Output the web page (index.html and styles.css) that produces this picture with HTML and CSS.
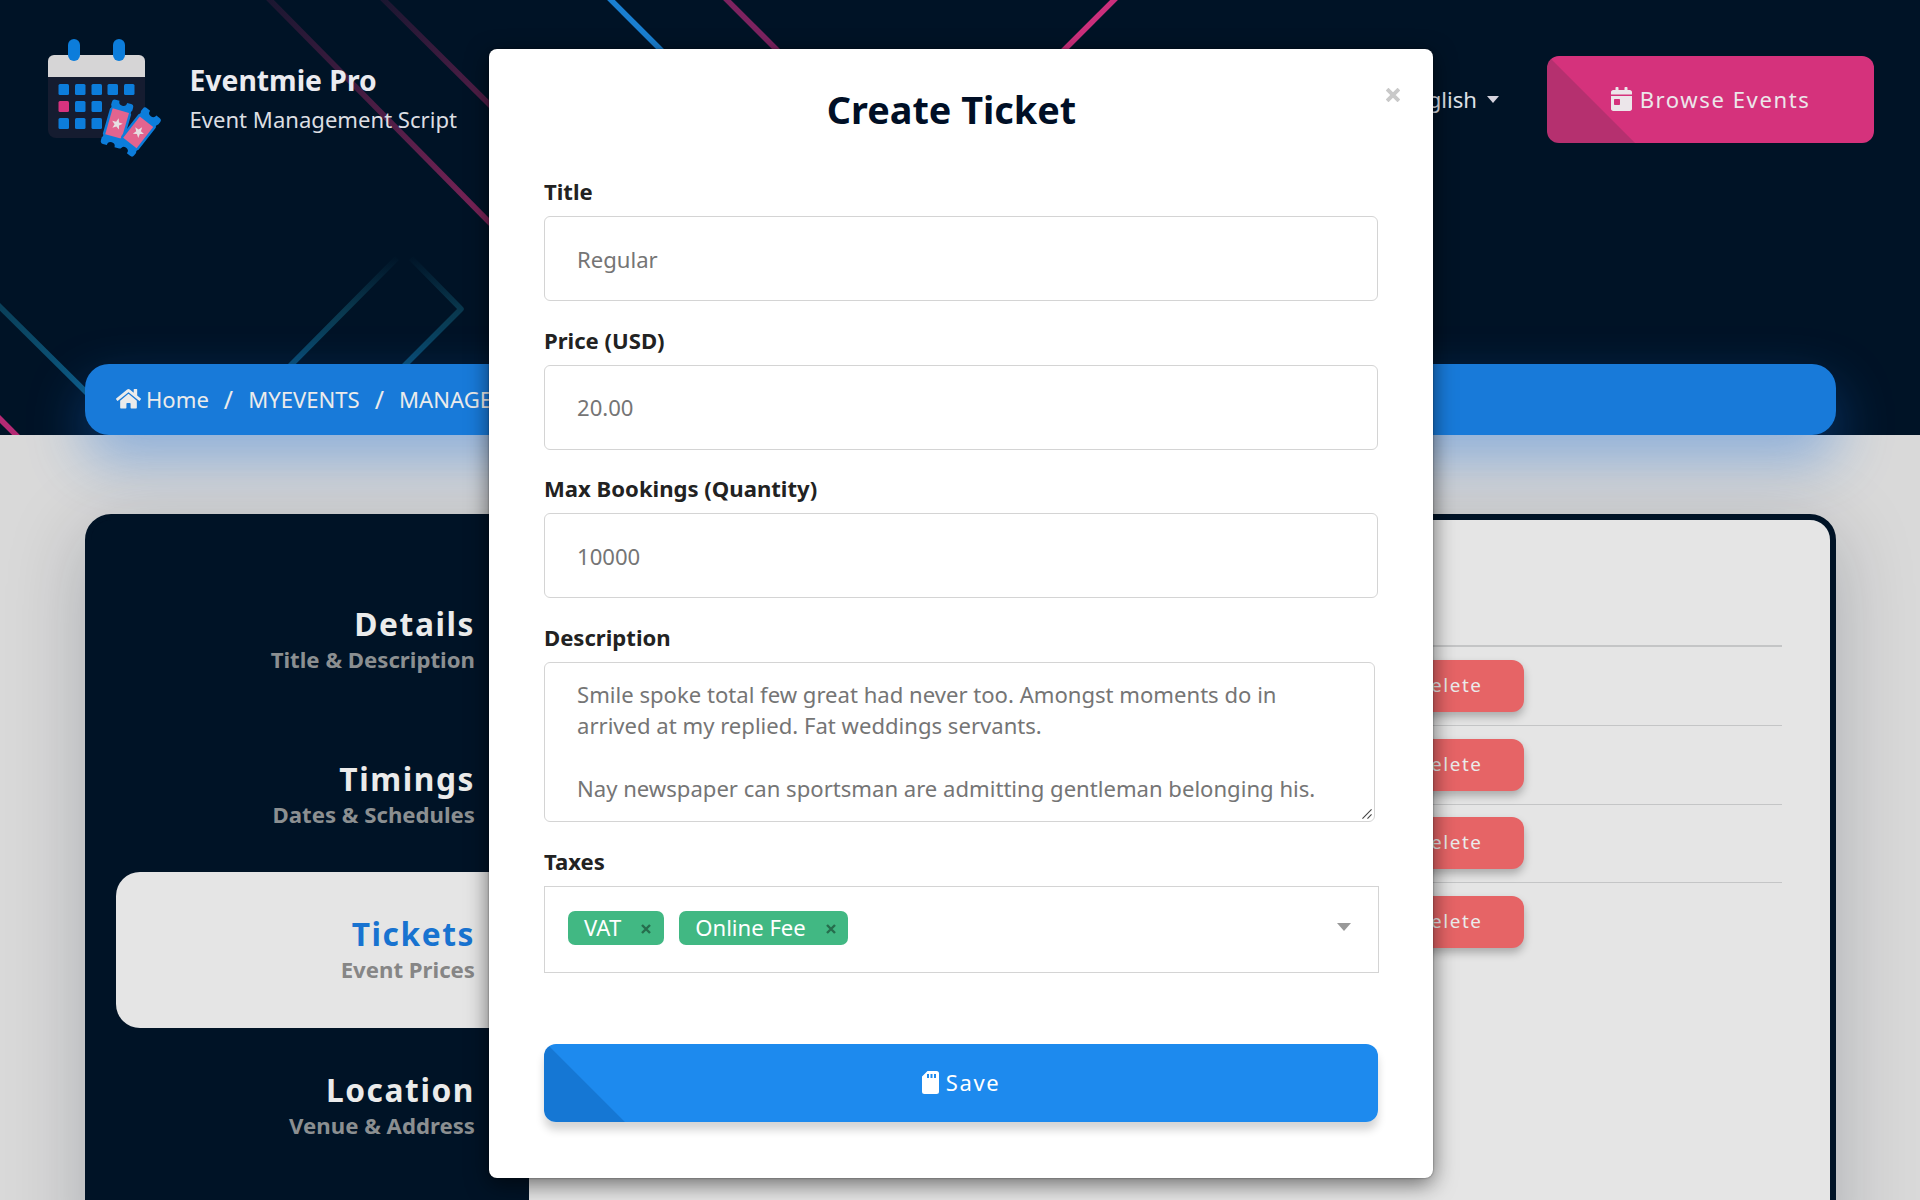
FILE: index.html
```html
<!DOCTYPE html>
<html lang="en">
<head>
<meta charset="utf-8">
<title>Eventmie Pro - Create Ticket</title>
<link rel="stylesheet" href="styles.css">
</head>
<body>
<div class="page">
  <header class="hero">
    <svg class="hero-lines" width="1920" height="435" viewBox="0 0 1920 435" fill="none" stroke-width="5.5" aria-hidden="true">
      <defs>
        <linearGradient id="pinkA" gradientUnits="userSpaceOnUse" x1="265" y1="0" x2="500" y2="235"><stop offset="0" stop-color="#d9307d" stop-opacity=".12"/><stop offset="1" stop-color="#d9307d" stop-opacity=".6"/></linearGradient>
        <linearGradient id="pinkB" gradientUnits="userSpaceOnUse" x1="380" y1="0" x2="490" y2="110"><stop offset="0" stop-color="#d9307d" stop-opacity=".12"/><stop offset="1" stop-color="#d9307d" stop-opacity=".4"/></linearGradient>
        <linearGradient id="tealA" gradientUnits="userSpaceOnUse" x1="0" y1="305" x2="85" y2="390"><stop offset="0" stop-color="#0d4f6b" stop-opacity=".75"/><stop offset="1" stop-color="#0d5a82"/></linearGradient>
        <linearGradient id="tealB" gradientUnits="userSpaceOnUse" x1="0" y1="255" x2="0" y2="364"><stop offset="0" stop-color="#0f5068" stop-opacity="0"/><stop offset=".5" stop-color="#0f5068" stop-opacity=".6"/><stop offset="1" stop-color="#0a5078" stop-opacity=".9"/></linearGradient>
      </defs>
      <path d="M267 -3L495 228" stroke="url(#pinkA)"/>
      <path d="M381 -3L495 110" stroke="url(#pinkB)"/>
      <path d="M607 -4L663 52" stroke="#1a7fd0"/>
      <path d="M723 -4L779 52" stroke="#7d2360"/>
      <path d="M1118 -4L1062 52" stroke="#cb2f7b"/>
      <path d="M-4 303L90 396" stroke="url(#tealA)"/>
      <path d="M-4 415L20 439" stroke="#b52a74"/>
      <path d="M286 370L397 258M411 258L461 309L400 370" stroke="url(#tealB)" stroke-linejoin="round"/>
    </svg>
    <nav class="navbar">
      <a class="brand">
        <svg class="logo" width="116" height="120" viewBox="0 0 116 120" aria-hidden="true">
          <path d="M1 20h97v72a8 8 0 0 1-8 8H9a8 8 0 0 1-8-8z" fill="#151c30"/>
          <path d="M1 39V23a6 6 0 0 1 6-6h85a6 6 0 0 1 6 6v16z" fill="#d6d5d6"/>
          <rect x="21" y="1" width="12" height="22" rx="6" fill="#0c7ddb"/>
          <rect x="66" y="1" width="12" height="22" rx="6" fill="#0c7ddb"/>
          <g fill="#0c7ddb">
            <rect x="11.500" y="46" width="10.500" height="11" rx="1.500"/><rect x="28" y="46" width="10.500" height="11" rx="1.500"/><rect x="44.500" y="46" width="10.500" height="11" rx="1.500"/><rect x="60.500" y="46" width="10.500" height="11" rx="1.500"/><rect x="77" y="46" width="10.500" height="11" rx="1.500"/>
            <rect x="28" y="63" width="10.500" height="11" rx="1.500"/><rect x="44.500" y="63" width="10.500" height="11" rx="1.500"/>
            <rect x="11.500" y="80" width="10.500" height="11" rx="1.500"/><rect x="28" y="80" width="10.500" height="11" rx="1.500"/><rect x="44.500" y="80" width="10.500" height="11" rx="1.500"/>
          </g>
          <rect x="11.500" y="63" width="10.500" height="11" rx="1.500" fill="#d6337f"/>
          <g transform="translate(70 86) rotate(16)">
            <path d="M-11 -20a3 3 0 0 1 3-3h4a4 4 0 0 0 8 0h4a3 3 0 0 1 3 3v3a3 3 0 0 0 0 4v26a3 3 0 0 0 0 4v3a3 3 0 0 1-3 3h-4a4 4 0 0 0-8 0h-4a3 3 0 0 1-3-3v-3a3 3 0 0 0 0-4v-26a3 3 0 0 0 0-4z" fill="#0c7ddb"/>
            <rect x="-8.500" y="-14" width="17" height="27" fill="#e3648f"/>
            <path d="M0 -6l1.500 4 4 .2-3.200 2.600 1.100 4L0 2.500l-3.400 2.300 1.100-4L-5.500-1.800l4-.2z" fill="#e6dfe2"/>
          </g>
          <g transform="translate(91.500 94) rotate(38)">
            <path d="M-11 -21a3 3 0 0 1 3-3h4a4 4 0 0 0 8 0h4a3 3 0 0 1 3 3v3a3 3 0 0 0 0 4v28a3 3 0 0 0 0 4v3a3 3 0 0 1-3 3h-4a4 4 0 0 0-8 0h-4a3 3 0 0 1-3-3v-3a3 3 0 0 0 0-4v-28a3 3 0 0 0 0-4z" fill="#0c7ddb"/>
            <rect x="-8.500" y="-13" width="17" height="27" fill="#e3648f"/>
            <path d="M0 -6l1.500 4 4 .2-3.200 2.600 1.100 4L0 2.500l-3.400 2.300 1.100-4L-5.500-1.800l4-.2z" fill="#e6dfe2"/>
          </g>
        </svg>
        <span class="brand-text"><strong>Eventmie Pro</strong><span>Event Management Script</span></span>
      </a>
      <div class="nav-right">
        <a class="language">English <i class="caret"></i></a>
        <a class="btn browse">
          <svg width="21" height="24" viewBox="0 0 448 512" fill="currentColor" aria-hidden="true"><path d="M0 464c0 26.500 21.500 48 48 48h352c26.500 0 48-21.500 48-48V192H0v272zm64-192c0-8.800 7.200-16 16-16h96c8.800 0 16 7.200 16 16v96c0 8.800-7.200 16-16 16H80c-8.800 0-16-7.200-16-16v-96zM400 64h-48V16c0-8.800-7.200-16-16-16h-32c-8.800 0-16 7.200-16 16v48H160V16c0-8.800-7.200-16-16-16h-32c-8.800 0-16 7.200-16 16v48H48C21.500 64 0 85.500 0 112v48h448v-48c0-26.500-21.500-48-48-48z"/></svg>
          <span>Browse Events</span>
        </a>
      </div>
    </nav>
    <div class="breadcrumb">
      <svg width="25" height="21" viewBox="0 0 576 480" fill="currentColor" aria-hidden="true"><path d="M280 116L96 268v164a16 16 0 0 0 16 16h112a16 16 0 0 0 16-16v-96a16 16 0 0 1 16-16h64a16 16 0 0 1 16 16v96a16 16 0 0 0 16 16h112a16 16 0 0 0 16-16V268L296 116a12 12 0 0 0-16 0zM572 219l-84-69V12a12 12 0 0 0-12-12h-56a12 12 0 0 0-12 12v72L318 11a48 48 0 0 0-61 0L4 219a12 12 0 0 0-1 17l25 31a12 12 0 0 0 17 2L280 76a12 12 0 0 1 16 0l235 193a12 12 0 0 0 17-2l25-31a12 12 0 0 0-1-17z"/></svg>
      <span class="crumb-home">Home</span><i>/</i><span>MYEVENTS</span><i>/</i><span>MANAGE EVENT</span>
    </div>
  </header>

  <main class="card">
    <ul class="steps">
      <li><strong>Details</strong><span>Title &amp; Description</span></li>
      <li><strong>Timings</strong><span>Dates &amp; Schedules</span></li>
      <li class="active"><strong>Tickets</strong><span>Event Prices</span></li>
      <li><strong>Location</strong><span>Venue &amp; Address</span></li>
    </ul>
    <section class="tickets">
      <div class="row"><a class="delete">Delete</a></div>
      <div class="row"><a class="delete">Delete</a></div>
      <div class="row"><a class="delete">Delete</a></div>
      <div class="row"><a class="delete">Delete</a></div>
    </section>
  </main>
</div>

<form class="modal">
  <div class="modal-head">
    <h3>Create Ticket</h3>
    <button type="button" class="close" aria-label="Close"><svg width="14" height="14" viewBox="0 0 13 13" stroke="#c9c9c9" stroke-width="3.600"><path d="M1 1l11 11M12 1L1 12"/></svg></button>
  </div>
  <label for="title">Title</label>
  <input id="title" placeholder="Regular">
  <label for="price">Price (USD)</label>
  <input id="price" placeholder="20.00">
  <label for="qty">Max Bookings (Quantity)</label>
  <input id="qty" placeholder="10000">
  <label for="desc">Description</label>
  <div class="area">
    <textarea id="desc" placeholder="Smile spoke total few great had never too. Amongst moments do in arrived at my replied. Fat weddings servants.&#10;&#10;Nay newspaper can sportsman are admitting gentleman belonging his."></textarea>
    <svg class="grip" width="10" height="10" viewBox="0 0 11 11" stroke="#444" stroke-width="1.200"><path d="M.5 10.500L10.500 .5M6 10.500L10.500 6"/></svg>
  </div>
  <label>Taxes</label>
  <div class="select">
    <span class="chip">VAT <svg width="10" height="10" viewBox="0 0 10 10" stroke="#266d4d" stroke-width="2.400"><path d="M1 1l8 8M9 1L1 9"/></svg></span>
    <span class="chip">Online Fee <svg width="10" height="10" viewBox="0 0 10 10" stroke="#266d4d" stroke-width="2.400"><path d="M1 1l8 8M9 1L1 9"/></svg></span>
    <i class="arrow"></i>
  </div>
  <button type="button" class="btn save">
    <svg width="17" height="23" viewBox="0 0 17 23" aria-hidden="true"><path fill="#fff" fill-rule="evenodd" d="M5.500 0H14.500A2.500 2.500 0 0 1 17 2.500V20.500A2.500 2.500 0 0 1 14.500 23H2.500A2.500 2.500 0 0 1 0 20.500V5.500zM5 3v4h2V3zM8.500 3v4h2V3zM12 3v4h2V3z"/></svg>
    <span>Save</span>
  </button>
</form>
</body>
</html>
```
FILE: styles.css
```css
* { box-sizing: border-box; }

body {
  margin: 0;
  width: 1920px;
  height: 1200px;
  overflow: hidden;
  position: relative;
  background: #d9d9d9;
  font: 22.1px/31.5px "Noto Sans", sans-serif;
  color: #ebebeb;
}

.page { height: 1200px; overflow: hidden; }

.hero {
  height: 435px;
  background: #001326;
  position: relative;
  display: flex;
  flex-direction: column;
  justify-content: space-between;
}
.hero-lines { position: absolute; left: 0; top: 0; }

.navbar {
  position: relative;
  display: flex;
  justify-content: space-between;
  padding: 38px 46px 0 47px;
}
.brand { display: flex; gap: 26.5px; }
.brand-text { display: flex; flex-direction: column; padding-top: 22px; color: #dcdee2; }
.brand-text strong { font-size: 28.3px; line-height: 40px; color: #ebebf0; }
.brand-text span { line-height: 38px; }

.nav-right { display: flex; align-items: flex-start; gap: 48px; padding-top: 17.5px; }
.language { display: flex; align-items: center; gap: 10px; height: 87px; color: #dfe1e6; padding-top: 1px; }
.caret { border: 6.5px solid transparent; border-top: 7px solid #d5d3de; border-bottom: 0; }

.btn {
  display: flex;
  align-items: center;
  justify-content: center;
  border: 0;
  border-radius: 12px;
  letter-spacing: 1.57px;
}
.browse {
  width: 327px;
  height: 87px;
  gap: 8px;
  color: #ece6ea;
  background: linear-gradient(45deg, #b5306f 62px, #d5327c 62.5px);
}
.browse span { padding-top: 1px; }

.breadcrumb {
  position: relative;
  display: flex;
  align-items: center;
  margin: 0 84px 0 85px;
  padding-left: 31px;
  height: 71px;
  border-radius: 24px;
  background: #187ad9;
  box-shadow: 0 24px 56px rgba(24, 110, 217, .42);
}
.breadcrumb .crumb-home { margin-left: 5px; }
.breadcrumb i { font-style: normal; font-size: 25px; padding: 0 15px; }

.card {
  display: flex;
  position: relative;
  margin: 79px 84px 0 85px;
  height: 760px;
  border: 6px solid #001326;
  border-radius: 26px;
  background: linear-gradient(90deg, #001326 60px, #e5e5e5 60px);
  box-shadow: 0 16px 80px rgba(0, 19, 38, .22);
}
.steps {
  width: 438px;
  margin: 0;
  padding: 41.5px 0 0 25px;
  list-style: none;
  background: #001326;
  border-radius: 20px 0 0 0;
  text-align: right;
}
.steps li {
  height: 155.4px;
  padding: 43px 54px 0 0;
  display: flex;
  flex-direction: column;
  color: #8b8f91;
}
.steps strong { font-size: 31.7px; line-height: 38px; letter-spacing: 1.57px; color: #ebebeb; }
.steps span { font-weight: 700; line-height: 34px; font-size: 22.2px; }
.steps .active { background: #e5e5e5; border-radius: 24px 0 0 24px; color: #868686; }
.steps .active strong { color: #1873d0; }

.tickets {
  flex: 1;
  margin: 125px 48px 0;
  border-top: 2px solid #c4c5c6;
}
.row { height: 78.35px; padding: 13px 258px 0 0; display: flex; justify-content: flex-end; }
.row + .row { border-top: 1px solid #c4c5c6; padding-top: 12.5px; }
.delete {
  width: 150px;
  height: 52px;
  padding-right: 41.5px;
  border-radius: 12px;
  background: #e66466;
  box-shadow: 0 5px 9px rgba(0, 0, 0, .25);
  text-align: right;
  font-size: 18.9px;
  line-height: 51px;
  letter-spacing: 1.57px;
}

.modal {
  position: absolute;
  left: 489px;
  top: 49px;
  width: 944px;
  height: 1129px;
  padding: 0 55px;
  border-radius: 8px;
  background: #fff;
  box-shadow: 0 6px 22px rgba(0, 0, 0, .55), 0 0 2px rgba(0, 0, 0, .5);
  color: #222;
}
.modal-head { display: flex; height: 127px; padding-top: 32px; }
.modal-head h3 { flex: 1; margin: 0; text-align: center; font-size: 37.800px; line-height: 57px; font-weight: 700; color: #000f26; }
.close { width: 20px; height: 28px; padding: 0; margin: 0 -25px 0 24px; border: 0; background: none; display: flex; align-items: center; justify-content: center; }

.modal label { display: block; height: 40px; line-height: 31px; font-weight: 700; }
.modal input, .modal textarea {
  display: block;
  width: 834px;
  height: 85px;
  margin: 0 0 23.500px;
  padding: 0 32px;
  border: 1px solid #d4d4d4;
  border-radius: 6px;
  background: #fff;
  font: inherit;
}
::placeholder { color: #757575; opacity: 1; }
.area { position: relative; width: 831px; }
.modal textarea { width: 831px; height: 160px; padding: 16px 32px 0; resize: none; overflow: hidden; margin-bottom: 24px; }
.grip { position: absolute; right: 3px; bottom: 3px; }

.select {
  position: relative;
  display: flex;
  align-items: flex-start;
  gap: 15.5px;
  width: 835px;
  height: 87px;
  padding: 24px 27px 0 23px;
  border: 1px solid #d4d4d4;
}
.chip { display: flex; align-items: center; gap: 20px; height: 34px; padding: 0 12.5px 0 16px; border-radius: 7px; background: #41b883; color: #fff; }
.chip svg { margin-top: 2px; }
.arrow { margin: 12px 0 0 auto; border: 7.500px solid transparent; border-top: 8px solid #999; border-bottom: 0; }

.save {
  width: 834px;
  height: 78px;
  margin-top: 71.500px;
  gap: 7px;
  padding-bottom: 3px;
  color: #fff;
  font: 22px "Noto Sans", sans-serif;
  background: linear-gradient(45deg, #1577d4 57px, #1d8aee 57.500px);
  box-shadow: 0 8px 9px rgba(0, 0, 0, .17);
}
```
